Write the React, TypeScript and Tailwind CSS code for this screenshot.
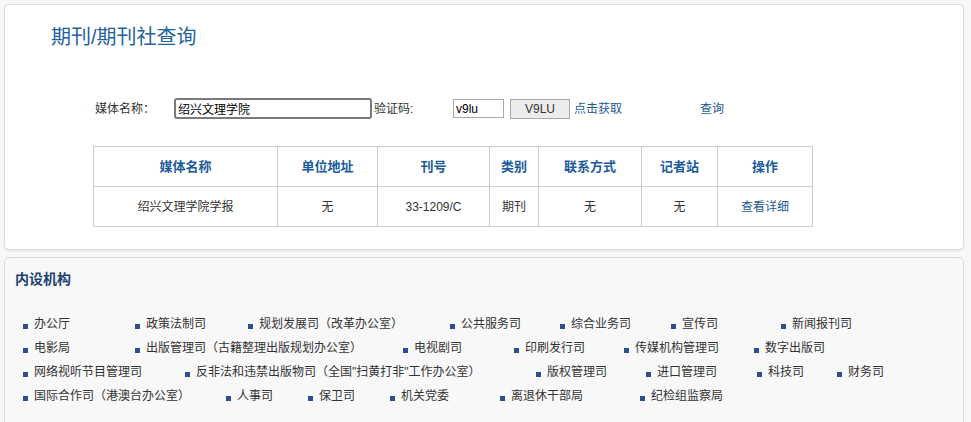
const font = "font-['Liberation_Sans','Noto_Sans_CJK_SC',sans-serif]";

const columns = [
  { title: '媒体名称', w: 'w-[184px]' },
  { title: '单位地址', w: 'w-[100px]' },
  { title: '刊号', w: 'w-[112px]' },
  { title: '类别', w: 'w-[49px]' },
  { title: '联系方式', w: 'w-[103px]' },
  { title: '记者站', w: 'w-[76px]' },
  { title: '操作', w: 'w-[95px]' },
];

const rows: { name: string; w: string }[][] = [
  [
    { name: '办公厅', w: 'w-[112px]' },
    { name: '政策法制司', w: 'w-[113px]' },
    { name: '规划发展司（改革办公室）', w: 'w-[202px]' },
    { name: '公共服务司', w: 'w-[110px]' },
    { name: '综合业务司', w: 'w-[111px]' },
    { name: '宣传司', w: 'w-[110px]' },
    { name: '新闻报刊司', w: 'w-auto' },
  ],
  [
    { name: '电影局', w: 'w-[112px]' },
    { name: '出版管理司（古籍整理出版规划办公室）', w: 'w-[268px]' },
    { name: '电视剧司', w: 'w-[111px]' },
    { name: '印刷发行司', w: 'w-[110px]' },
    { name: '传媒机构管理司', w: 'w-[130px]' },
    { name: '数字出版司', w: 'w-auto' },
  ],
  [
    { name: '网络视听节目管理司', w: 'w-[162px]' },
    { name: '反非法和违禁出版物司（全国"扫黄打非"工作办公室）', w: 'w-[351px]' },
    { name: '版权管理司', w: 'w-[110px]' },
    { name: '进口管理司', w: 'w-[111px]' },
    { name: '科技司', w: 'w-[80px]' },
    { name: '财务司', w: 'w-auto' },
  ],
  [
    { name: '国际合作司（港澳台办公室）', w: 'w-[203px]' },
    { name: '人事司', w: 'w-[82px]' },
    { name: '保卫司', w: 'w-[82px]' },
    { name: '机关党委', w: 'w-[110px]' },
    { name: '离退休干部局', w: 'w-[140px]' },
    { name: '纪检组监察局', w: 'w-auto' },
  ],
];

export default function App() {
  return (
    <div className={`${font} w-[971px] h-[422px] overflow-hidden bg-[#f7f7f7] pt-[4px] pl-[4px] text-[12px] text-[#333]`}>
      {/* search panel */}
      <div className="w-[960px] h-[246px] bg-white border border-[#dcdcdc] rounded-[5px] shadow-[0_1px_2px_rgba(0,0,0,0.08)] pt-[18px]">
        <h1 className="ml-[46px] text-[20px] leading-[28px] text-[#22629c]">期刊/期刊社查询</h1>

        <div className="mt-[47px] ml-[90px] flex items-center h-[21px]">
          <span className="w-[79px]">媒体名称：</span>
          <input
            defaultValue="绍兴文理学院"
            className={`${font} w-[198px] h-[21px] border-2 border-[#7a7a7a] rounded-[3px] px-[2px] text-[12px] text-black outline-none`}
          />
          <span className="ml-[2px] w-[79px]">验证码:</span>
          <input
            defaultValue="v9lu"
            className={`${font} w-[51px] h-[19px] border border-[#a9a9a9] px-[2px] text-[12px] text-black outline-none`}
          />
          <button className="ml-[6px] w-[60px] h-[20px] bg-[#ececec] border border-[#a9a9a9] text-[12px] text-[#333]">
            V9LU
          </button>
          <a className="ml-[4px] text-[#1f5a94] cursor-pointer">点击获取</a>
          <a className="ml-[78px] text-[#1f5a94] cursor-pointer">查询</a>
        </div>

        <table className="mt-[27px] ml-[88px] border-collapse">
          <thead>
            <tr className="h-[40px]">
              {columns.map((c) => (
                <th key={c.title} className={`${c.w} border border-[#cccccc] text-[13px] font-bold text-[#1b5b9a]`}>
                  {c.title}
                </th>
              ))}
            </tr>
          </thead>
          <tbody>
            <tr className="h-[40px] text-center">
              <td className="border border-[#cccccc]">绍兴文理学院学报</td>
              <td className="border border-[#cccccc]">无</td>
              <td className="border border-[#cccccc]">33-1209/C</td>
              <td className="border border-[#cccccc]">期刊</td>
              <td className="border border-[#cccccc]">无</td>
              <td className="border border-[#cccccc]">无</td>
              <td className="border border-[#cccccc] text-[#1f5a94]">查看详细</td>
            </tr>
          </tbody>
        </table>
      </div>

      {/* departments panel */}
      <div className="mt-[7px] w-[960px] h-[200px] bg-[#f8f8f8] border border-[#dcdcdc] rounded-t-[5px] pt-[11px]">
        <h2 className="ml-[10px] text-[14px] leading-[20px] font-bold text-[#1e3f72]">内设机构</h2>
        <ul className="mt-[23px] ml-[18px]">
          {rows.map((row, i) => (
            <li key={i} className="flex h-[24px] items-center">
              {row.map((d) => (
                <div key={d.name} className={`${d.w} shrink-0 flex items-center whitespace-nowrap`}>
                  <span className="w-[5px] h-[5px] mt-[4px] bg-[#2b4f8f]" />
                  <span className="ml-[6px]">{d.name}</span>
                </div>
              ))}
            </li>
          ))}
        </ul>
      </div>
    </div>
  );
}
